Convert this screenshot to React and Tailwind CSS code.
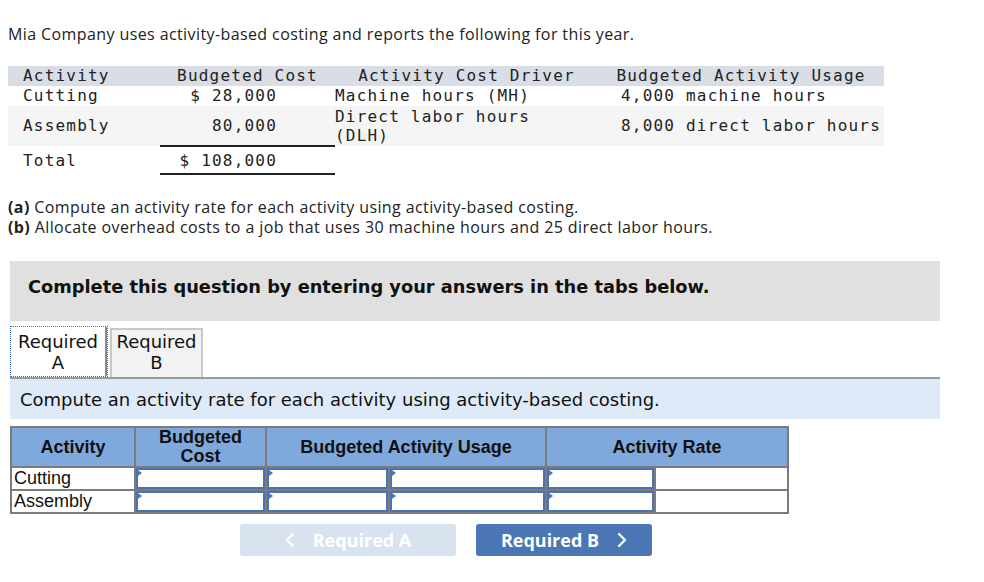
import React from "react";

const mono = { fontFamily: '"DejaVu Sans Mono", monospace' };

function Marker() {
  return (
    <span className="absolute left-0 top-0 h-0 w-0 border-y-[3px] border-l-[4px] border-y-transparent border-l-[#4a78c2]" />
  );
}

function InputCell({ w }) {
  return (
    <td className={`${w} bg-white p-0`}>
      <div className="relative h-[21px] border-2 border-[#4c72b0] bg-white">
        <Marker />
      </div>
    </td>
  );
}

export default function App() {
  return (
    <div className="min-h-[582px] w-[984px] bg-white pl-2 pt-6 text-[#222]" style={{ fontFamily: '"Open Sans", "Liberation Sans", sans-serif' }}>
      <p className="text-[16px] leading-5 tracking-[0.4px] text-[#222]">
        Mia Company uses activity-based costing and reports the following for this year.
      </p>

      <table className="mt-[22px] w-[876px] table-fixed border-collapse text-[16px] leading-5 tracking-[1.2px] text-[#222]" style={mono}>
        <colgroup>
          <col className="w-[152px]" />
          <col className="w-[175px]" />
          <col className="w-[263px]" />
          <col className="w-[286px]" />
        </colgroup>
        <thead>
          <tr className="h-5 bg-[#d9dde6]">
            <th className="pl-[15px] text-left font-normal">Activity</th>
            <th className="text-center font-normal">Budgeted Cost</th>
            <th className="text-center font-normal">Activity Cost Driver</th>
            <th className="text-center font-normal">Budgeted Activity Usage</th>
          </tr>
        </thead>
        <tbody>
          <tr className="h-5">
            <td className="pl-[15px]">Cutting</td>
            <td className="pr-[58px] text-right">$ 28,000</td>
            <td>Machine hours (MH)</td>
            <td className="pl-[23px]">4,000 machine hours</td>
          </tr>
          <tr className="h-10 bg-[#f5f5f5]">
            <td className="pl-[15px]">Assembly</td>
            <td className="border-b-2 border-[#222] pr-[58px] text-right">80,000</td>
            <td className="leading-[19px]">
              Direct labor hours
              <br />
              (DLH)
            </td>
            <td className="pl-[23px]">8,000 direct labor hours</td>
          </tr>
          <tr className="h-[28px]">
            <td className="pl-[15px] pt-[2px]">Total</td>
            <td className="border-b-2 border-[#222] pr-[58px] pt-[2px] text-right">$ 108,000</td>
            <td />
            <td />
          </tr>
        </tbody>
      </table>

      <div className="mt-[22px] text-[16px] leading-5 tracking-[0.4px] text-[#222]">
        <p>
          <span className="font-bold">(a)</span> Compute an activity rate for each activity using activity-based costing.
        </p>
        <p>
          <span className="font-bold">(b)</span> Allocate overhead costs to a job that uses 30 machine hours and 25 direct labor hours.
        </p>
      </div>

      <div className="ml-[2px] w-[930px]" style={{ fontFamily: '"DejaVu Sans", Verdana, sans-serif' }}>
        <div className="mt-6 h-[60px] bg-[#e0e0e0] pl-[18px] pt-[15px]">
          <p className="text-[17.8px] font-bold leading-[22px] text-[#111]">
            Complete this question by entering your answers in the tabs below.
          </p>
        </div>

        <div className="mt-[5px] flex items-end gap-[2px] text-[18px] leading-[21px] text-[#111]">
          <div className="flex h-[51px] w-[98px] flex-col items-center justify-center border border-dotted border-[#3b6fc0] bg-white">
            <div className="flex h-full w-full flex-col items-center justify-center border-r-2 border-[#8a8a8a]">
              <span>Required</span>
              <span>A</span>
            </div>
          </div>
          <div className="flex h-[49px] w-[93px] flex-col items-center justify-center border-2 border-b-0 border-[#c8c8c8] bg-[#f2f2f2] pb-[3px]">
            <span>Required</span>
            <span>B</span>
          </div>
        </div>

        <div className="flex h-[42px] items-center border-t-2 border-[#9a9a9a] bg-[#deeaf7] pl-[10px]">
          <p className="text-[18px] text-[#111]">
            Compute an activity rate for each activity using activity-based costing.
          </p>
        </div>

        <table
          className="mt-[7px] border-separate border-spacing-[2px] bg-[#7b7b7b] text-[18px] text-[#111]"
          style={{ fontFamily: '"Liberation Sans", Arial, sans-serif' }}
        >
          <thead>
            <tr className="h-[38px] bg-[#7fa9dc]">
              <th className="w-[122px] font-bold leading-[19px]">Activity</th>
              <th className="w-[129px] font-bold leading-[19px]">
                Budgeted
                <br />
                Cost
              </th>
              <th colSpan={2} className="font-bold leading-[19px]">Budgeted Activity Usage</th>
              <th colSpan={2} className="font-bold leading-[19px]">Activity Rate</th>
            </tr>
          </thead>
          <tbody>
            {["Cutting", "Assembly"].map((name) => (
              <tr key={name} className="h-[21px]">
                <td className="w-[122px] bg-white p-0 pl-[2px] leading-[21px]">{name}</td>
                <InputCell w="w-[129px]" />
                <InputCell w="w-[121px]" />
                <InputCell w="w-[155px]" />
                <InputCell w="w-[107px]" />
                <td className="w-[131px] bg-white p-0" />
              </tr>
            ))}
          </tbody>
        </table>

        <div className="ml-[230px] mt-[10px] flex gap-5 text-[18px] font-bold text-white" style={{ fontFamily: '"Open Sans", Lato, sans-serif' }}>
          <div className="flex h-8 w-[216px] items-center justify-center gap-[18px] rounded-[3px] bg-[#d9e3ef]">
            <svg width="10" height="16" viewBox="0 0 10 16" fill="none" stroke="white" strokeWidth="2.2" strokeLinecap="round" strokeLinejoin="round">
              <path d="M8 2 L2 8 L8 14" />
            </svg>
            <span>Required A</span>
          </div>
          <div className="flex h-8 w-[176px] items-center justify-center gap-[18px] rounded-[3px] bg-[#4a76b4]">
            <span>Required B</span>
            <svg width="10" height="16" viewBox="0 0 10 16" fill="none" stroke="white" strokeWidth="2.2" strokeLinecap="round" strokeLinejoin="round">
              <path d="M2 2 L8 8 L2 14" />
            </svg>
          </div>
        </div>
      </div>
    </div>
  );
}
